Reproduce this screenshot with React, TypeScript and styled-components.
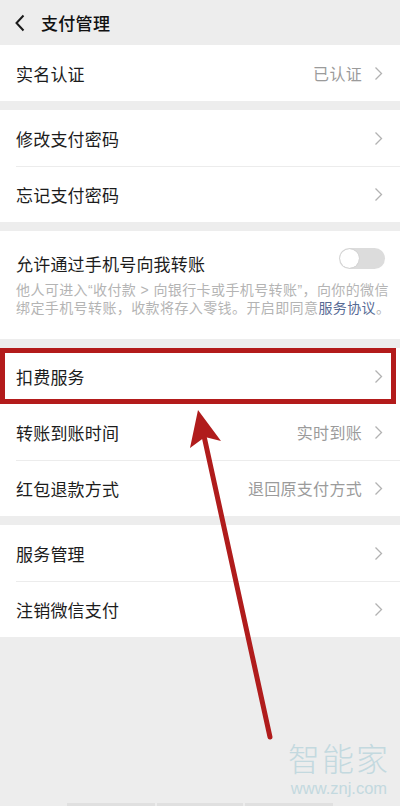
import React from 'react';
import styled, { createGlobalStyle } from 'styled-components';

const GlobalStyle = createGlobalStyle`
  html, body {
    margin: 0;
    padding: 0;
    background: #ededed;
  }
  body {
    font-family: "Noto Sans CJK SC", "Noto Sans", sans-serif;
    -webkit-font-smoothing: antialiased;
  }
`;

const Page = styled.div`
  position: relative;
  width: 400px;
  min-height: 806px;
  display: flex;
  flex-direction: column;
  gap: 9px;
  background: #ededed;
  overflow: hidden;
`;

const Header = styled.div`
  height: 45px;
  display: flex;
  align-items: center;
  gap: 15px;
  padding-left: 14px;
  margin-bottom: -9px;
`;

const Title = styled.div`
  font-size: 17px;
  font-weight: 500;
  color: #111;
  letter-spacing: 0.3px;
`;

const Section = styled.div`
  background: #fff;
  display: flex;
  flex-direction: column;
`;

const Row = styled.div<{ $highlight?: boolean }>`
  position: relative;
  height: 56px;
  display: flex;
  align-items: center;
  padding: 0 17px 0 16px;
  & + &::before {
    content: '';
    position: absolute;
    top: 0;
    left: 16px;
    right: 0;
    height: 1px;
    background: #ececec;
  }
  ${(p) =>
    p.$highlight &&
    `
    &::after {
      content: '';
      position: absolute;
      top: 0;
      left: 0;
      right: 4px;
      bottom: 0;
      border: 5px solid #b31b1b;
      z-index: 2;
    }
  `}
`;

const Label = styled.span`
  flex: 1;
  font-size: 17px;
  color: #1c1c1c;
  letter-spacing: 0.2px;
`;

const Value = styled.span`
  font-size: 16px;
  color: #9b9b9b;
  margin-right: 12px;
  letter-spacing: 0.3px;
`;

const ToggleBlock = styled.div`
  background: #fff;
  padding: 20px 16px 22px 16px;
`;

const ToggleHead = styled.div`
  display: flex;
  align-items: center;
  justify-content: space-between;
  height: 24px;
`;

const Switch = styled.div`
  width: 46px;
  height: 21px;
  border-radius: 11px;
  background: #dcdcdc;
  position: relative;
  margin-top: -10px;
  margin-right: -1px;
  &::after {
    content: '';
    position: absolute;
    top: 1px;
    left: 1px;
    width: 19px;
    height: 19px;
    border-radius: 50%;
    background: #fff;
    box-shadow: 0 0 1px rgba(0, 0, 0, 0.25);
  }
`;

const Desc = styled.div`
  margin-top: 6px;
  font-family: "Liberation Sans", "Noto Sans CJK SC", sans-serif;
  font-size: 14px;
  line-height: 18px;
  color: #b4b4b4;
  letter-spacing: 0.4px;
  white-space: nowrap;
`;

const Link = styled.span`
  color: #576b95;
`;

const Spacer = styled.div`
  flex: 1;
`;

const BottomBar = styled.div`
  display: flex;
  justify-content: center;
  gap: 2px;
  height: 3px;
  margin-top: -9px;
`;

const BottomTab = styled.div<{ $w: number }>`
  width: ${(p) => p.$w}px;
  background: #e0e0e0;
`;

const Watermark = styled.div`
  position: absolute;
  right: 10px;
  top: 741px;
  display: flex;
  flex-direction: column;
  align-items: center;
  color: #c3d9df;
  pointer-events: none;
  font-family: "Liberation Sans", "Noto Sans CJK SC", sans-serif;
`;

const MarkLogo = styled.div`
  font-size: 32px;
  line-height: 38px;
  font-weight: 300;
  letter-spacing: 2px;
`;

const MarkUrl = styled.div`
  font-size: 16.5px;
  line-height: 19px;
`;

const ArrowLayer = styled.svg`
  position: absolute;
  left: 0;
  top: 0;
  pointer-events: none;
  z-index: 3;
`;

const Chevron = () => (
  <svg width="9" height="15" viewBox="0 0 9 15">
    <path d="M1.5 1.5 L7.5 7.5 L1.5 13.5" fill="none" stroke="#b2b2b2" strokeWidth="1.3" />
  </svg>
);

const BackIcon = () => (
  <svg width="12" height="18" viewBox="0 0 12 18">
    <path d="M9.5 1.5 L2.5 9 L9.5 16.5" fill="none" stroke="#1a1a1a" strokeWidth="2" />
  </svg>
);

const Item = ({ label, value, highlight }: { label: string; value?: string; highlight?: boolean }) => (
  <Row $highlight={highlight}>
    <Label>{label}</Label>
    {value && <Value>{value}</Value>}
    <Chevron />
  </Row>
);

export default function App() {
  return (
    <>
      <GlobalStyle />
      <Page>
        <Header>
          <BackIcon />
          <Title>支付管理</Title>
        </Header>
        <Section>
          <Item label="实名认证" value="已认证" />
        </Section>
        <Section>
          <Item label="修改支付密码" />
          <Item label="忘记支付密码" />
        </Section>
        <ToggleBlock>
          <ToggleHead>
            <Label>允许通过手机号向我转账</Label>
            <Switch />
          </ToggleHead>
          <Desc>
            他人可进入“收付款 &gt; 向银行卡或手机号转账”，向你的微信
            <br />
            绑定手机号转账，收款将存入零钱。开启即同意<Link>服务协议</Link>。
          </Desc>
        </ToggleBlock>
        <Section>
          <Item label="扣费服务" highlight />
          <Item label="转账到账时间" value="实时到账" />
          <Item label="红包退款方式" value="退回原支付方式" />
        </Section>
        <Section>
          <Item label="服务管理" />
          <Item label="注销微信支付" />
        </Section>
        <Spacer />
        <BottomBar>
          <BottomTab $w={88} />
          <BottomTab $w={86} />
          <BottomTab $w={88} />
        </BottomBar>
        <Watermark>
          <MarkLogo>智能家</MarkLogo>
          <MarkUrl>www.znj.com</MarkUrl>
        </Watermark>
        <ArrowLayer width="400" height="806" viewBox="0 0 400 806">
          <line x1="204" y1="436" x2="270" y2="737" stroke="#b01c1c" strokeWidth="5" strokeLinecap="round" />
          <polygon points="198,410 221,441 205,437 190,448" fill="#b01c1c" />
        </ArrowLayer>
      </Page>
    </>
  );
}
